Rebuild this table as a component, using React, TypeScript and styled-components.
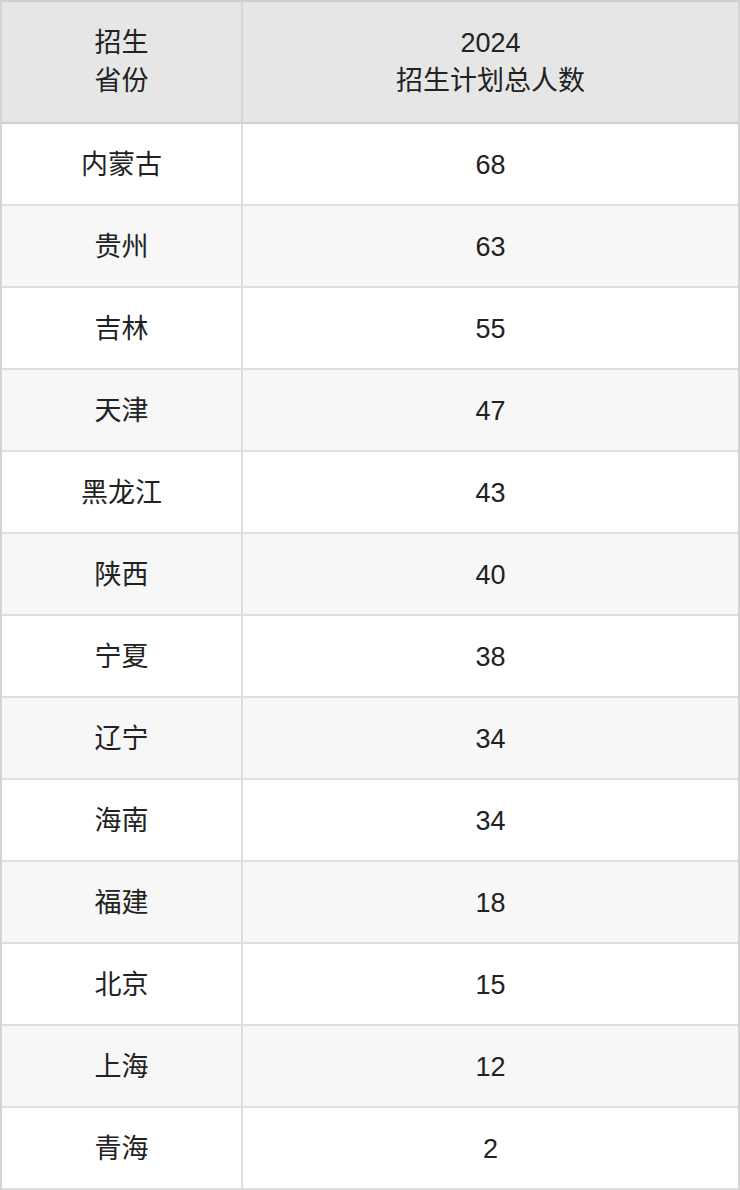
import React from 'react';
import styled, { createGlobalStyle } from 'styled-components';

const rows: [string, number][] = [
  ['内蒙古', 68],
  ['贵州', 63],
  ['吉林', 55],
  ['天津', 47],
  ['黑龙江', 43],
  ['陕西', 40],
  ['宁夏', 38],
  ['辽宁', 34],
  ['海南', 34],
  ['福建', 18],
  ['北京', 15],
  ['上海', 12],
  ['青海', 2],
];

const App: React.FC = () => {
  return (
    <>
      <GlobalStyle />
      <Table>
        <HeadRow>
          <HeadCell>
            招生
            <br />
            省份
          </HeadCell>
          <HeadCell>
            2024
            <br />
            招生计划总人数
          </HeadCell>
        </HeadRow>
        {rows.map(([province, count], i) => (
          <BodyRow key={province} $striped={i % 2 === 1}>
            <BodyCell>{province}</BodyCell>
            <BodyCell>{count}</BodyCell>
          </BodyRow>
        ))}
      </Table>
    </>
  );
};

const GlobalStyle = createGlobalStyle`
  body {
    margin: 0;
    background: #fff;
    font-family: "Liberation Sans", "Noto Sans CJK SC", sans-serif;
    color: #222;
  }
`;

const Table = styled.div`
  width: 740px;
  display: flex;
  flex-direction: column;
  border-left: 2px solid #d4d4d4;
  border-right: 2px solid #d4d4d4;
  box-sizing: border-box;
`;

const HeadRow = styled.div`
  display: grid;
  grid-template-columns: 239px 1fr;
  background: #e6e6e6;
  border-top: 2px solid #cfcfcf;
  border-bottom: 2px solid #cfcfcf;
  height: 124px;
  box-sizing: border-box;
`;

const HeadCell = styled.div`
  display: flex;
  align-items: center;
  justify-content: center;
  text-align: center;
  font-size: 27px;
  line-height: 38px;
  color: #222;

  & + & {
    border-left: 2px solid #d4d4d4;
  }
`;

const BodyRow = styled.div<{ $striped: boolean }>`
  display: grid;
  grid-template-columns: 239px 1fr;
  height: 82px;
  box-sizing: border-box;
  border-bottom: 2px solid #dedede;
  background: ${(p) => (p.$striped ? '#f7f7f7' : '#fff')};
`;

const BodyCell = styled.div`
  display: flex;
  align-items: center;
  justify-content: center;
  font-size: 27px;
  line-height: 36px;
  padding-top: 1px;
  color: #222;

  & + & {
    border-left: 2px solid #dedede;
  }
`;

export default App;
